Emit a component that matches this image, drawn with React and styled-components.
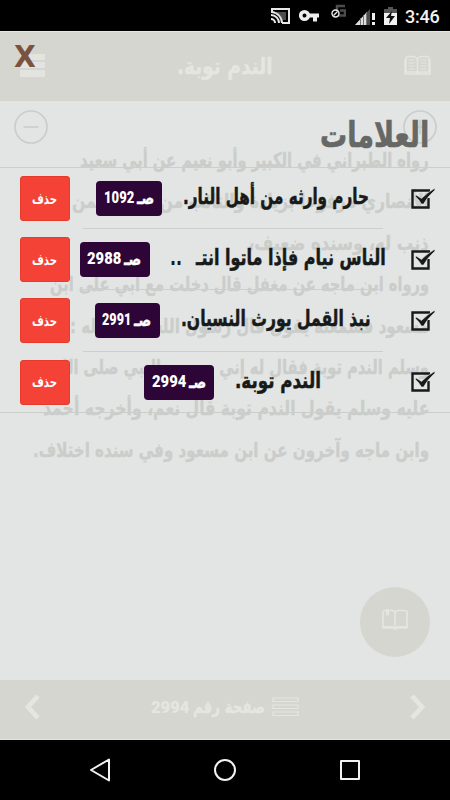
import React, { useLayoutEffect, useRef, useState } from "react";
import styled, { createGlobalStyle } from "styled-components";

const GlobalStyle = createGlobalStyle`
  * { box-sizing: border-box; }
  body { margin: 0; background: #000; }
  svg { display: block; flex: none; }
`;

const arabic = `"DejaVu Sans Condensed", "DejaVu Sans", sans-serif`;

/* Single line of text condensed horizontally to an exact width. */
const FitBox = styled.span`
  display: block;
  flex: none;
  width: ${(p) => p.$width}px;
  height: ${(p) => p.$line}px;
  direction: rtl;
`;
const FitInner = styled.span`
  display: inline-block;
  white-space: pre;
  transform-origin: right center;
  font-size: ${(p) => p.$size}px;
  line-height: ${(p) => p.$line}px;
  -webkit-text-stroke: ${(p) => p.$heavy || 0}px currentColor;
`;
function Fit({ width, size, line, heavy, children }) {
  const ref = useRef(null);
  const [scale, setScale] = useState(1);
  useLayoutEffect(() => {
    setScale(width / ref.current.offsetWidth);
  }, [width, size, children]);
  return (
    <FitBox $width={width} $line={line}>
      <FitInner ref={ref} $size={size} $line={line} $heavy={heavy} style={{ transform: `scaleX(${scale})` }}>
        {children}
      </FitInner>
    </FitBox>
  );
}

const Phone = styled.div`
  display: flex;
  flex-direction: column;
  width: 450px;
  height: 800px;
  overflow: hidden;
  background: #e2e5e3;
  font-family: ${arabic};
  font-weight: 700;
`;
const StatusBar = styled.header`
  height: 31px;
  flex: none;
  display: flex;
  background: #000;
  justify-content: flex-end;
`;
const Clock = styled.span`
  width: 45px;
  font: 500 18px/33px Roboto, sans-serif;
  letter-spacing: -0.2px;
  color: #f2f2f2;
`;
const Screen = styled.main`
  position: relative;
  height: 709px;
  flex: none;
  display: flex;
  flex-direction: column;
`;
const AppBar = styled.div`
  height: 70px;
  flex: none;
  display: flex;
  align-items: center;
  justify-content: space-between;
  padding: 0 19px 2px 20px;
  background: #d5d6cf;
  border-top: 1px solid #e6e6e2;
  color: #e5e6e1;
`;
const Reader = styled.article`
  flex: 1;
  display: flex;
  flex-direction: column;
  align-items: flex-end;
  padding: 8px 21px 0 14px;
  color: #cbcdcb;
`;
const ZoomRow = styled.div`
  align-self: stretch;
  display: flex;
  justify-content: space-between;
  height: 36px;
  margin-right: -8px;
`;
const Lines = styled.div`
  display: flex;
  flex-direction: column;
  align-items: flex-end;
  margin-top: -5px;
  gap: 1px;
`;
const FabSlot = styled.div`
  flex: 1;
  display: flex;
  align-items: flex-end;
  margin: 0 -1px 23px 0;
`;
const Fab = styled.div`
  width: 70px;
  height: 70px;
  border-radius: 50%;
  background: #d5d6cf;
  display: flex;
  justify-content: center;
  padding-top: 21px;
`;
const Pager = styled.footer`
  height: 60px;
  flex: none;
  display: flex;
  align-items: center;
  justify-content: space-between;
  padding: 0 24px 6px;
  background: #d5d6cf;
  color: #e5e6e1;
  border-bottom: 1px solid #e4e4df;
`;
const PageLabel = styled.div`
  display: flex;
  align-items: center;
  gap: 4px;
`;
const PageNumber = styled.div`
  display: flex;
  font-family: Roboto, sans-serif;
  font-weight: 900;
`;
const RowsSlot = styled.div`
  margin-left: 3px;
`;
const NavBar = styled.nav`
  height: 60px;
  flex: none;
  display: flex;
  justify-content: center;
  background: #000;
`;

/* Bookmarks dialog, floating over the reader. */
const Dialog = styled.section`
  position: absolute;
  inset: 0;
  display: flex;
  flex-direction: column;
`;
const DialogHead = styled.div`
  height: 137px;
  flex: none;
  display: flex;
  justify-content: space-between;
  padding: 7px 21px 0 14px;
  border-bottom: 1px solid #cccecc;
`;
const Close = styled.div`
  height: 37px;
  padding-top: 1px;
  color: #7b523e;
`;
const Heading = styled.div`
  height: 122px;
  padding-top: 75px;
  color: #666866;
`;
const List = styled.div`
  height: 245px;
  flex: none;
  display: flex;
  flex-direction: column;
  border-bottom: 1px solid #cccecc;
`;
const Row = styled.div`
  height: 61.2px;
  flex: none;
  display: flex;
  align-items: center;
  padding: 0 13px 0 20px;
`;
const Delete = styled.div`
  width: 50px;
  height: 45px;
  flex: none;
  display: flex;
  align-items: center;
  justify-content: center;
  background: #f44336;
  border: 1px solid #e63a2b;
  border-radius: 3px;
  color: #fff;
`;
const Entry = styled.div`
  width: 300px;
  height: 61.2px;
  flex: none;
  margin: 0 26px 0 13px;
  display: flex;
  align-items: center;
  justify-content: center;
  gap: 22px;
  border-bottom: ${(p) => (p.$last ? "0" : "1px solid #ccd0cd")};
  color: #171a18;
`;
const EntryText = styled.div`
  display: flex;
  flex-direction: row-reverse;
  gap: 13px;
  margin: -2px 1px 0 -1px;
`;
const Badge = styled.div`
  height: 35px;
  padding: 0 8px 1px;
  flex: none;
  display: flex;
  align-items: center;
  gap: 3px;
  border-radius: 4px;
  background: #2d0536;
  color: #fff;
`;
const CheckSlot = styled.div`
  padding-bottom: 2px;
`;

const CastIcon = () => (
  <svg width="21" height="31" viewBox="0 0 21 31" fill="none" stroke="#e8e8e8" strokeWidth="2">
    <path d="M2 13V9h17v14h-7M1 15a8 8 0 0 1 8 8M1 19a4 4 0 0 1 4 4M2 12a11 11 0 0 1 10 11" />
    <path d="M5 12h11v8h-4q-2-6-7-7z" fill="#999" stroke="none" opacity=".5" />
  </svg>
);
const KeyIcon = () => (
  <svg width="22" height="31" viewBox="0 0 22 31">
    <circle cx="5.500" cy="15.500" r="3.800" fill="none" stroke="#eee" strokeWidth="3.600" />
    <path d="M10 13.500h10v4h-2v4h-4v-4h-4z" fill="#eee" />
  </svg>
);
const NoDataIcon = () => (
  <svg width="16" height="31" viewBox="0 0 16 31" fill="none">
    <path d="M15 6H7v5M10 10.500h5v5H8" stroke="#4c4c4c" strokeWidth="2.500" />
    <circle cx="5.500" cy="13.500" r="3.500" stroke="#eee" strokeWidth="1.400" />
    <path d="m3.500 15.500 4-4" stroke="#eee" strokeWidth="1.300" />
  </svg>
);
const SignalIcon = () => (
  <svg width="22" height="31" viewBox="0 0 22 31">
    <path d="M1 25 16 9v16z" fill="#4b4b4b" />
    <path d="M1 25 13 12v13z" fill="#ddd" />
    <path d="M6.500 18v7M9.500 15v10M12.500 12v13" stroke="#777" />
    <path d="M18 13h3v7h-3zM18 22h3v3h-3z" fill="#eee" />
  </svg>
);
const BatteryIcon = () => (
  <svg width="13" height="31" viewBox="0 0 13 31">
    <path d="M4 7h5v2h4v4H0V9h4z" fill="#555" />
    <path d="M0 13h13v12H0z" fill="#f2f2f2" />
    <path d="m8 11-6 7h4l-1 6 6-8H7z" fill="#111" />
  </svg>
);
const StatusIcons = styled.div`
  display: flex;
  width: 127px;
  justify-content: space-between;
  margin-right: 8px;
`;
const MenuIcon = () => (
  <svg width="25" height="25" viewBox="0 0 25 25" fill="#e3e4e0">
    <path d="M0 1h25v6H0zM0 9h25v6H0zM0 17h25v7H0z" />
  </svg>
);
const BookIcon = () => (
  <svg width="27" height="22" viewBox="0 0 27 22" fill="none" stroke="#e5e6e1" strokeWidth="1.500">
    <path d="M13.500 4Q12 1.500 9 1.500H4Q2 1.500 2 3.500V17h9.500q2 0 2 1.500 0-1.500 2-1.500H25V3.500q0-2-2-2h-5q-3 0-4.500 2.500v14M2 5H1v14h25V5h-1" />
    <path d="M4.500 5h6M4.500 8h6M4.500 11h6M4.500 14h6M16.500 5h6M16.500 8h6M16.500 11h6M16.500 14h6" strokeWidth="1" />
  </svg>
);
const SavedIcon = () => (
  <svg width="26" height="22" viewBox="0 0 26 22" fill="none" stroke="#e5e6e1" strokeWidth="1.600">
    <path d="M10 2.500H3Q1 2.500 1 4.500V19.500h24V4.500q0-2-2-2h-7q-2 0-3 2-1-2-3-2zM13 4.500v13" />
    <path d="M1 18h9q2 0 3 1 1-1 3-1h9v2.500h-9.500l-1 1h-3l-1-1H1z" fill="#e5e6e1" stroke="none" />
    <path d="M4 1h3v7L5.500 6.500 4 8z" fill="#e5e6e1" stroke="none" />
  </svg>
);
const CircleIcon = ({ plus }) => (
  <svg width="34" height="36" viewBox="0 0 34 36" fill="none" stroke="#cbcdcb" strokeWidth="1.700">
    <circle cx="17" cy="18" r="16" />
    <path d={plus ? "M9.500 18h15M17 10.500v15" : "M9.500 18h15"} />
  </svg>
);
const Chevron = ({ right }) => (
  <svg width="18" height="26" viewBox="0 0 18 26" fill="none" stroke="#e5e6e1" strokeWidth="4.800">
    <path d={right ? "m4 2 10 11L4 24" : "M14 2 4 13l10 11"} />
  </svg>
);
const RowsIcon = () => (
  <svg width="27" height="22" viewBox="0 0 27 22" fill="none" stroke="#e5e6e1" strokeWidth="1.200">
    <path d="M1 2h25v3.500H1zM1 9h25v3.500H1zM1 16h25v3.500H1z" />
  </svg>
);
const CheckIcon = () => (
  <svg width="27" height="24" viewBox="0 0 27 24">
    <path d="M21 4.500H3.500v17h16V12" fill="none" stroke="#171a18" strokeWidth="2.400" />
    <path d="m7 9 5.500 3.500Q19 6 25.500 2.500l.5 1.500Q18.500 10.500 14.500 18h-2Q10 13.500 6.500 10.500z" fill="#171a18" stroke="#e2e5e3" strokeWidth=".5" />
  </svg>
);
const NavIcons = () => (
  <svg width="280" height="60" viewBox="0 0 280 60" fill="none" stroke="#f2f2f2" strokeWidth="2" strokeLinejoin="round">
    <path d="M24 19.500v21L6 30z" />
    <circle cx="140" cy="30" r="10" />
    <path d="M256 21h18v18h-18z" />
  </svg>
);

const lines = [
  ["رواه الطبراني في الكبير وأبو نعيم عن أبي سعيد", 349],
  ["الأنصاري مرفوعا بزيادة والتائب من الذنب كمن", 357],
  ["ذنب له، وسنده ضعيف،", 181],
  ["ورواه ابن ماجه عن مغفل قال دخلت مع أبي على ابن", 379],
  ["مسعود فسمعته يقول قال رسول الله صلى الله :", 359],
  ["وسلم الندم توبة فقال له إني سمعت النبي صلى الله", 376],
  ["عليه وسلم يقول الندم توبة قال نعم، وأخرجه أحمد", 386],
  ["وابن ماجه وآخرون عن ابن مسعود وفي سنده اختلاف.", 396],
];
const bookmarks = [
  { text: "حارم وارثه من أهل النار.", width: 186, page: "1092", digits: 30 },
  { text: "الناس نيام فإذا ماتوا انتـ", width: 190, more: "..", page: "2988", digits: 34 },
  { text: "نبذ القمل يورث النسيان.", width: 190, page: "2991", digits: 29 },
  { text: "الندم توبة.", width: 86, page: "2994", digits: 34 },
];

export default function App() {
  return (
    <Phone>
      <GlobalStyle />
      <StatusBar>
        <StatusIcons>
          <CastIcon /><KeyIcon /><NoDataIcon /><SignalIcon /><BatteryIcon />
        </StatusIcons>
        <Clock>3:46</Clock>
      </StatusBar>
      <Screen>
        <AppBar>
          <MenuIcon />
          <Fit width={96} size={23} line={34} heavy={0.3}>الندم توبة.</Fit>
          <BookIcon />
        </AppBar>
        <Reader>
          <ZoomRow><CircleIcon /><CircleIcon plus /></ZoomRow>
          <Lines>
            {lines.map(([text, width]) => (
              <Fit key={text} width={width} size={20} line={40.4} heavy={0.3}>{text}</Fit>
            ))}
          </Lines>
          <FabSlot><Fab><SavedIcon /></Fab></FabSlot>
        </Reader>
        <Pager>
          <Chevron />
          <PageLabel>
            <PageNumber><Fit width={38} size={17} line={30}>2994</Fit></PageNumber>
            <Fit width={72} size={18} line={30} heavy={0.3}>صفحة رقم</Fit>
            <RowsSlot><RowsIcon /></RowsSlot>
          </PageLabel>
          <Chevron right />
        </Pager>
        <Dialog>
          <DialogHead>
            <Close><Fit width={22} size={30} line={36}>X</Fit></Close>
            <Heading><Fit width={109} size={35} line={44} heavy={0.6}>العلامات</Fit></Heading>
          </DialogHead>
          <List>
            {bookmarks.map((b, i) => (
              <Row key={b.page}>
                <Delete><Fit width={25} size={14.5} line={22}>حذف</Fit></Delete>
                <Entry $last={i === bookmarks.length - 1}>
                  <Badge>
                    <PageNumber><Fit width={b.digits} size={16.5} line={30}>{b.page}</Fit></PageNumber>
                    <Fit width={17} size={18} line={30} heavy={0.3}>صـ</Fit>
                  </Badge>
                  <EntryText>
                    <Fit width={b.width} size={22} line={36} heavy={0.5}>{b.text}</Fit>
                    {b.more && <Fit width={12} size={22} line={36}>{b.more}</Fit>}
                  </EntryText>
                </Entry>
                <CheckSlot><CheckIcon /></CheckSlot>
              </Row>
            ))}
          </List>
        </Dialog>
      </Screen>
      <NavBar><NavIcons /></NavBar>
    </Phone>
  );
}
